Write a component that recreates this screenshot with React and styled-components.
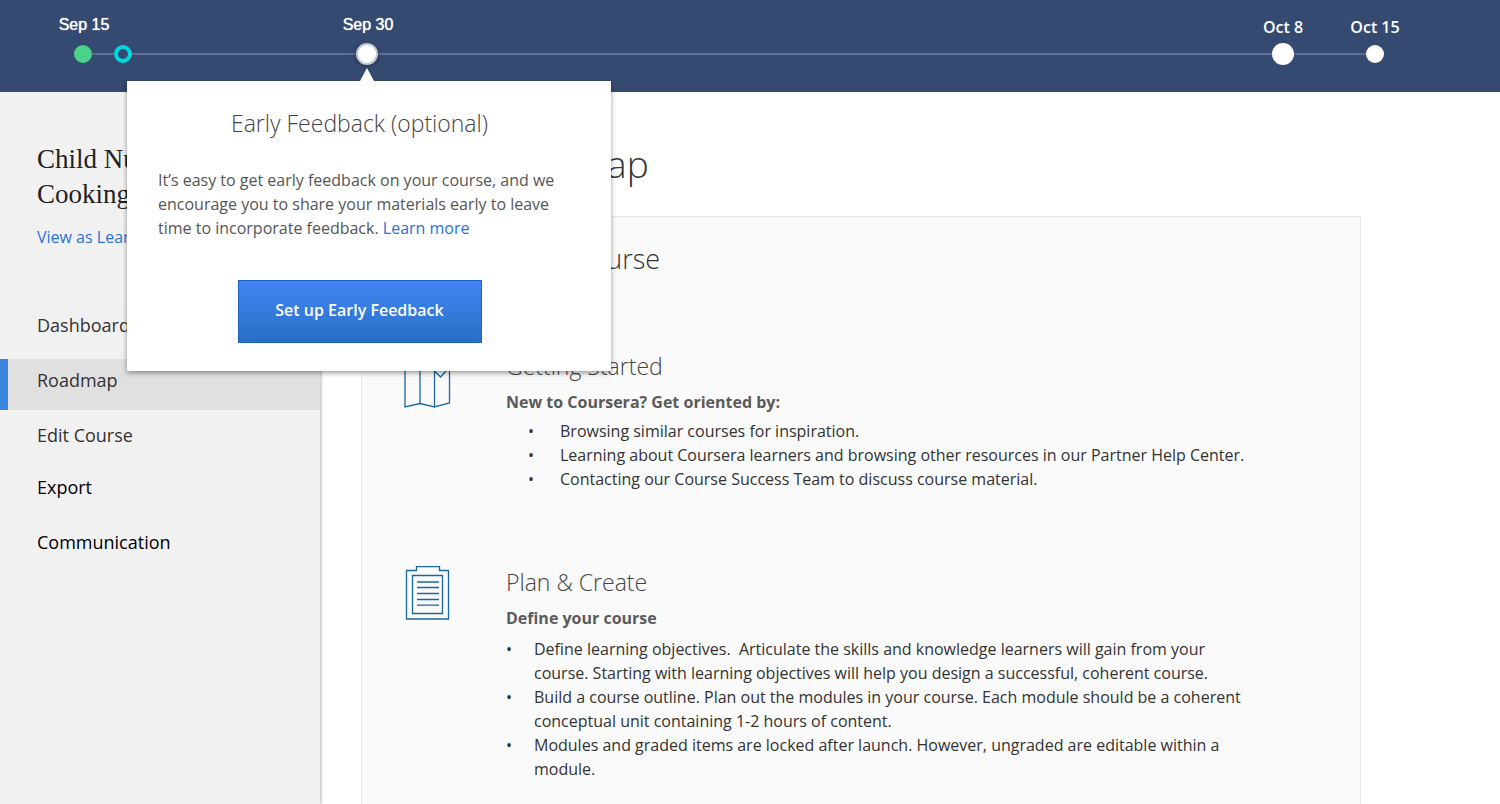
import React from 'react';
import styled, { createGlobalStyle, css } from 'styled-components';

const GlobalStyle = createGlobalStyle`
  *, *::before, *::after { box-sizing: border-box; }
  html, body, #root { min-height: 100vh; }
  body {
    margin: 0;
    background: #fff;
    color: #333;
    font-family: 'Open Sans', 'Noto Sans', sans-serif;
    font-size: 16px;
    line-height: 24px;
  }
  h1, h2, h3, h4, p, ul, ol { margin: 0; padding: 0; }
  ul, ol { list-style: none; }
`;

const Page = styled.div`
  display: flex;
  flex-direction: column;
  min-height: 100vh;
`;

const Header = styled.header`
  position: relative;
  z-index: 2;
  height: 92px;
  padding: 0 116px 0 74px;
  background: #354a71;
`;

const Timeline = styled.ol`
  display: flex;
  align-items: center;
  height: 108px;
`;

const Segment = styled.li`
  flex: ${(p) => p.$grow || 0} 0 ${(p) => p.$basis || 0}px;
  height: 2px;
  background: #5d6e8f;
`;

const Milestone = styled.li`
  position: relative;
  flex: none;
  display: flex;
  justify-content: center;
`;

const Dot = styled.span`
  width: ${(p) => (p.$large ? 22 : 18)}px;
  height: ${(p) => (p.$large ? 22 : 18)}px;
  border-radius: 50%;
  background: #fff;
  ${(p) => p.$state === 'done' && css`background: #4ad28b;`}
  ${(p) => p.$state === 'now' && css`
    background: transparent;
    border: 4px solid #00d8e0;
  `}
  ${(p) => p.$state === 'open' && css`
    border: 2px solid #c3c9d6;
    box-shadow: 0 1px 4px rgba(0, 0, 0, 0.4);
  `}
`;

const DateLabel = styled.span`
  position: absolute;
  bottom: 50%;
  left: 50%;
  transform: translateX(-50%);
  margin-bottom: 15px;
  color: #fff;
  font-size: 16px;
  font-weight: 600;
  line-height: 24px;
  white-space: nowrap;
  ${(p) => p.$plain && css`
    margin-bottom: 17px;
    padding-left: 2px;
    font-family: 'Liberation Sans', Arial, sans-serif;
    font-weight: 400;
    text-shadow: 0 0 1px #fff;
  `}
`;

const Popover = styled.section`
  position: absolute;
  top: 38px;
  left: -229px;
  width: 484px;
  padding: 28px 50px 28px 31px;
  background: #fff;
  box-shadow: 0 2px 5px rgba(0, 0, 0, 0.4);
  color: #555;

  &::before {
    content: '';
    position: absolute;
    left: 233px;
    bottom: 100%;
    border: 7px solid transparent;
    border-top: 0;
    border-bottom: 13px solid #fff;
  }
`;

const PopoverTitle = styled.h2`
  color: #444;
  font-size: 23px;
  font-weight: 300;
  line-height: 28px;
  text-align: center;
`;

const PopoverText = styled.p`
  margin: 31px 0 40px;
`;

const Link = styled.a`
  color: #2a73d9;
  text-decoration: none;
`;

const PrimaryButton = styled.button`
  display: block;
  width: 244px;
  height: 63px;
  margin: 0 auto;
  padding: 0 0 3px;
  border: 1px solid #1a62bd;
  background: linear-gradient(#4285f4, #2870c4);
  color: #fff;
  font: 600 16px/24px 'Open Sans', sans-serif;
`;

const Body = styled.div`
  flex: 1;
  display: flex;
`;

const Sidebar = styled.aside`
  flex: none;
  width: 320px;
  padding-top: 50px;
  background: #f1f1f1;
  box-shadow: 0 0 4px rgba(0, 0, 0, 0.45);
`;

const CourseName = styled.h2`
  padding: 0 37px;
  color: #222;
  font-family: 'Liberation Serif', serif;
  font-size: 27px;
  font-weight: 400;
  line-height: 35px;
`;

const LearnerLink = styled(Link)`
  display: block;
  margin: 13px 37px 55px;
`;

const NavList = styled.ul`
  display: flex;
  flex-direction: column;
  gap: 4px;
  margin-bottom: 1px;
`;

const NavLink = styled.a`
  display: block;
  padding: 9px 29px 18px;
  border-left: 8px solid transparent;
  color: ${(p) => (p.$strong ? '#000' : '#333')};
  font-size: 18px;
  line-height: 24px;
  text-decoration: none;
  ${(p) => p.$active && css`
    border-color: #3a87dd;
    background: #e0e0e0;
  `}
`;

const Main = styled.main`
  flex: 1;
  display: flex;
  flex-direction: column;
  padding: 48px 139px 0 41px;
`;

const PageTitle = styled.h1`
  color: #333;
  font-size: 37px;
  font-weight: 300;
  line-height: 48px;
`;

const Panel = styled.section`
  flex: 1;
  margin-top: 28px;
  padding: 24px 104px 0 42px;
  border: 1px solid #e9e9e9;
  border-bottom: 0;
  background: #fafafa;
`;

const PanelTitle = styled.h2`
  color: #333;
  font-size: 27px;
  font-weight: 300;
  line-height: 36px;
`;

const Step = styled.article`
  display: flex;
  align-items: flex-start;
  margin-top: ${(p) => (p.$last ? 75 : 73)}px;
  padding-bottom: ${(p) => (p.$last ? 20 : 0)}px;
`;

const StepIcon = styled.div`
  flex: none;
  width: 102px;
  height: 60px;
  svg { display: block; }
`;

const StepTitle = styled.h3`
  color: #444;
  font-size: 23px;
  font-weight: 300;
  line-height: 32px;
`;

const StepSubtitle = styled.h4`
  margin: 8px 0 ${(p) => (p.$loose ? 7 : 5)}px;
  color: #5a5a5a;
  font-size: 16px;
  font-weight: 700;
`;

const Bullets = styled.ul`
  padding-left: ${(p) => (p.$indent ? 54 : 28)}px;

  li { position: relative; }
  li::before {
    content: '•';
    position: absolute;
    left: ${(p) => (p.$indent ? -32 : -28)}px;
  }
`;

const MapIcon = () => (
  <svg width="48" height="60" viewBox="0 0 48 60" fill="none" stroke="#1a699c" strokeWidth="1.3" aria-hidden="true">
    <path d="M1 12 16 8.500 30.500 12V57L16 53.500 1 57ZM16 8.500V53.500M30.500 12V57L45.500 53V8.500L30.500 12M30.500 21l6 6 5.500-6" />
  </svg>
);

const ClipboardIcon = () => (
  <svg width="48" height="60" viewBox="0 0 48 60" fill="none" stroke="#1a699c" strokeWidth="1.3" aria-hidden="true">
    <path d="M2.500 4.500H12.500V.700H35.500V4.500H44.500V53H2.500ZM8.500 9.500H38.500V47.500H8.500Z" />
    <path d="M13 16H35M13 21.500H35M13 27.500H35M13 33.500H35M13 39.200H35" />
  </svg>
);

export default function App() {
  return (
    <Page>
      <GlobalStyle />
      <Header>
        <Timeline>
          <Milestone><DateLabel $plain>Sep 15</DateLabel><Dot $state="done" /></Milestone>
          <Segment $basis={22} />
          <Milestone><Dot $state="now" /></Milestone>
          <Segment $grow={224} />
          <Milestone>
            <DateLabel $plain>Sep 30</DateLabel>
            <Dot $large $state="open" />
            <Popover>
              <PopoverTitle>Early Feedback (optional)</PopoverTitle>
              <PopoverText>
                It’s easy to get early feedback on your course, and we encourage you to share
                your materials early to leave time to incorporate feedback.{' '}
                <Link href="#learn-more">Learn more</Link>
              </PopoverText>
              <PrimaryButton type="button">Set up Early Feedback</PrimaryButton>
            </Popover>
          </Milestone>
          <Segment $grow={894} />
          <Milestone><DateLabel>Oct 8</DateLabel><Dot $large /></Milestone>
          <Segment $basis={72} />
          <Milestone><DateLabel>Oct 15</DateLabel><Dot /></Milestone>
        </Timeline>
      </Header>
      <Body>
        <Sidebar>
          <CourseName>Child Nutrition and Cooking</CourseName>
          <LearnerLink href="#learner">View as Learner</LearnerLink>
          <nav>
            <NavList>
              <li><NavLink href="#dashboard">Dashboard</NavLink></li>
              <li><NavLink href="#roadmap" $active aria-current="page">Roadmap</NavLink></li>
              <li><NavLink href="#edit">Edit Course</NavLink></li>
            </NavList>
            <NavList>
              <li><NavLink href="#export" $strong>Export</NavLink></li>
              <li><NavLink href="#communication" $strong>Communication</NavLink></li>
            </NavList>
          </nav>
        </Sidebar>
        <Main>
          <PageTitle>Course Roadmap</PageTitle>
          <Panel>
            <PanelTitle>Develop Your Course</PanelTitle>
            <Step>
              <StepIcon><MapIcon /></StepIcon>
              <div>
                <StepTitle>Getting Started</StepTitle>
                <StepSubtitle>New to Coursera? Get oriented by:</StepSubtitle>
                <Bullets $indent>
                  <li>Browsing similar courses for inspiration.</li>
                  <li>Learning about Coursera learners and browsing other resources in our Partner Help Center.</li>
                  <li>Contacting our Course Success Team to discuss course material.</li>
                </Bullets>
              </div>
            </Step>
            <Step $last>
              <StepIcon><ClipboardIcon /></StepIcon>
              <div>
                <StepTitle>Plan &amp; Create</StepTitle>
                <StepSubtitle $loose>Define your course</StepSubtitle>
                <Bullets>
                  <li>Define learning objectives.&nbsp; Articulate the skills and knowledge learners will gain from your course. Starting with learning objectives will help you design a successful, coherent course.</li>
                  <li>Build a course outline. Plan out the modules in your course. Each module should be a coherent conceptual unit containing 1-2 hours of content.</li>
                  <li>Modules and graded items are locked after launch. However, ungraded are editable within a module.</li>
                </Bullets>
              </div>
            </Step>
          </Panel>
        </Main>
      </Body>
    </Page>
  );
}
